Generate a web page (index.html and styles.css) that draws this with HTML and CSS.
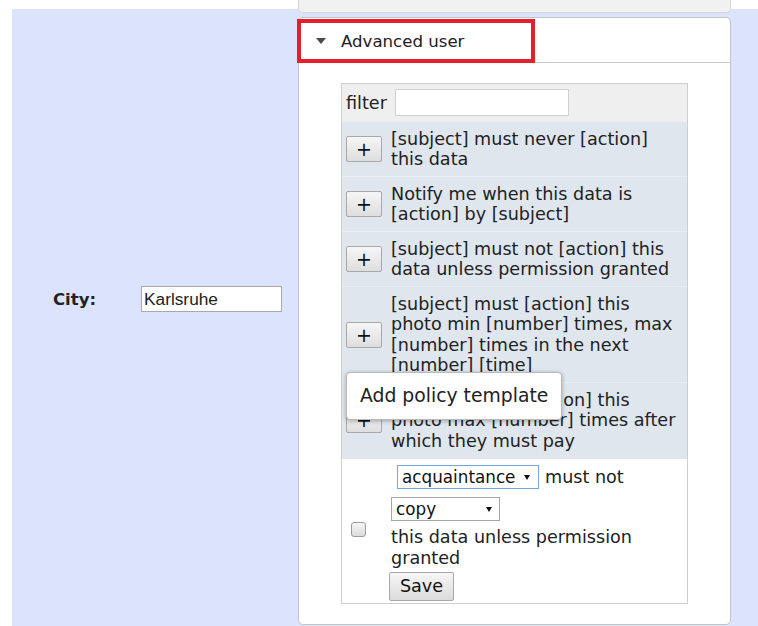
FILE: index.html
```html
<!DOCTYPE html>
<html lang="en">
<head>
<meta charset="utf-8">
<title>Profile privacy settings</title>
<link rel="stylesheet" href="styles.css">
</head>
<body>
<div class="page">
  <div class="fields">
    <label class="field-label" for="city">City:</label>
    <input class="text-input" id="city" type="text" value="Karlsruhe">
  </div>

  <div class="side">
    <div class="stub"></div>
    <section class="panel">
      <header class="panel-head">
        <span class="caret"></span>
        <span class="panel-title">Advanced user</span>
        <span class="highlight"></span>
      </header>

      <div class="panel-body">
        <div class="templates">
          <div class="filter-row">
            <span>filter</span>
            <input class="filter-input" type="text">
          </div>

          <div class="tpl-row">
            <button class="add-btn" type="button">+</button>
            <div class="tpl-text">[subject] must never [action] this data</div>
          </div>
          <div class="tpl-row">
            <button class="add-btn" type="button">+</button>
            <div class="tpl-text">Notify me when this data is [action] by [subject]</div>
          </div>
          <div class="tpl-row">
            <button class="add-btn" type="button">+</button>
            <div class="tpl-text">[subject] must not [action] this data unless permission granted</div>
          </div>
          <div class="tpl-row">
            <button class="add-btn" type="button">+</button>
            <div class="tpl-text">[subject] must [action] this photo min [number] times, max [number] times in the next [number] [time]</div>
          </div>
          <div class="tpl-row">
            <button class="add-btn" type="button">+</button>
            <div class="tpl-text">[subject] must [action] this photo max [number] times after which they must pay</div>
            <div class="tooltip">Add policy template</div>
          </div>

          <div class="rule-row">
            <input class="check" type="checkbox">
            <div class="rule-body">
              <div class="rule-line first">
                <span class="select-wrap wide focus">
                  <select class="select"><option>acquaintance</option></select>
                </span>
                <span>must not</span>
              </div>
              <div class="rule-line">
                <span class="select-wrap narrow">
                  <select class="select"><option>copy</option></select>
                </span>
              </div>
              <div class="rule-text">this data unless permission granted</div>
              <button class="save-btn" type="button">Save</button>
            </div>
          </div>
        </div>
      </div>
    </section>
  </div>
</div>
</body>
</html>
```

FILE: styles.css
```css
html, body {
  margin: 0;
  padding: 0;
  background: #ffffff;
  overflow: hidden;
}

body {
  font-family: "DejaVu Sans", Verdana, sans-serif;
  font-size: 17.6px;
  color: #222222;
}

.page {
  margin: 9px 0 0 12px;
  min-height: 617px;
  background: #dbe4fc;
  display: flex;
  align-items: flex-start;
}

/* left column with the profile field */
.fields {
  width: 286px;
  box-sizing: border-box;
  padding: 0 0 37px 41px;
  align-self: stretch;
  display: flex;
  align-items: center;
}

.field-label {
  width: 88px;
  font-weight: bold;
  font-size: 16.5px;
}

.text-input {
  width: 141px;
  height: 26px;
  box-sizing: border-box;
  border: 1px solid #a9a9a9;
  padding: 0 2px;
  font-family: "Liberation Sans", Arial, sans-serif;
  font-size: 17.3px;
  color: #222;
  background: #fff;
}

/* right column: collapsed section stub + open section */
.side {
  width: 433px;
  display: flex;
  flex-direction: column;
}

.stub {
  margin-top: -9px;
  height: 13px;
  box-sizing: border-box;
  background: #f1f1f1;
  border: 1px solid #d6d6d6;
  border-top: none;
  border-radius: 0 0 5px 5px;
}

.panel {
  margin-top: 4px;
  background: #ffffff;
  border: 1px solid #c4c4c4;
  border-radius: 5px;
}

.panel-head {
  position: relative;
  height: 45px;
  box-sizing: border-box;
  padding: 2px 0 0 17px;
  border-bottom: 1px solid #cccccc;
  display: flex;
  align-items: center;
}

.caret {
  width: 0;
  height: 0;
  border-left: 5px solid transparent;
  border-right: 5px solid transparent;
  border-top: 6px solid #4a4a4a;
  margin-right: 15px;
}

.panel-title {
  font-size: 16.6px;
  color: #222;
}

.highlight {
  position: absolute;
  left: -2px;
  top: 1px;
  width: 238px;
  height: 44px;
  box-sizing: border-box;
  border: 4px solid #e3202b;
}

.panel-body {
  padding: 20px 42px;
}

.templates {
  border: 1px solid #cfcfcf;
}

.filter-row {
  height: 37px;
  background: #efefef;
  display: flex;
  align-items: center;
  gap: 8px;
  padding: 0 4px;
}

.filter-input {
  width: 174px;
  height: 27px;
  box-sizing: border-box;
  border: 1px solid #d2d2d2;
  background: #fff;
  margin: 0;
}

.tpl-row {
  position: relative;
  display: grid;
  grid-template-columns: 36px 1fr;
  column-gap: 9px;
  align-items: center;
  padding: 6.5px 4px;
  background: #dfe6ee;
  border-top: 1px solid #e9eef3;
  line-height: 20.5px;
}

.add-btn {
  width: 36px;
  height: 26px;
  margin: 0;
  padding: 0;
  border: 1px solid #a8a8a8;
  border-radius: 2px;
  background: linear-gradient(#f6f6f6, #dedede);
  font-family: "DejaVu Sans", sans-serif;
  font-size: 19px;
  line-height: 22px;
  color: #111;
}

.tooltip {
  position: absolute;
  left: 4px;
  top: -11px;
  width: 216px;
  height: 48px;
  box-sizing: border-box;
  padding-left: 13px;
  display: flex;
  align-items: center;
  background: #ffffff;
  border: 1px solid #b9b9b9;
  border-radius: 4px;
  box-shadow: 0 1px 4px rgba(0, 0, 0, 0.3);
  font-size: 18.8px;
  color: #222;
  z-index: 2;
}

.rule-row {
  display: grid;
  grid-template-columns: 36px 1fr;
  column-gap: 9px;
  padding: 2px 4px;
  border-top: 1px solid #e4e4e4;
  background: #fff;
}

.check {
  appearance: none;
  -webkit-appearance: none;
  align-self: center;
  margin: 0 0 3px 5px;
  width: 15px;
  height: 15px;
  border: 1px solid #9d9d9d;
  border-radius: 3px;
  background: linear-gradient(#f5f5f5, #dcdcdc);
}

.rule-line {
  height: 32px;
  display: flex;
  align-items: center;
  gap: 6px;
}

.rule-line.first {
  padding-left: 6px;
}

.select-wrap {
  position: relative;
  display: inline-block;
  height: 24px;
}

.select-wrap::after {
  content: "";
  position: absolute;
  top: 10px;
  width: 0;
  height: 0;
  border-left: 3px solid transparent;
  border-right: 3px solid transparent;
  border-top: 5px solid #111;
  pointer-events: none;
}

.select-wrap.wide { width: 142px; }
.select-wrap.wide::after { right: 9px; }
.select-wrap.narrow { width: 109px; }
.select-wrap.narrow::after { right: 8px; }

.select {
  appearance: none;
  -webkit-appearance: none;
  width: 100%;
  height: 24px;
  box-sizing: border-box;
  margin: 0;
  padding: 0 0 0 4px;
  border: 1px solid #a6a6a6;
  border-radius: 0;
  background: #fff;
  font-family: "DejaVu Sans", sans-serif;
  font-size: 16.8px;
  color: #111;
}

.select-wrap.focus .select {
  border-color: #7aa3df;
}

.rule-text {
  margin-top: 2px;
  line-height: 21px;
}

.save-btn {
  display: block;
  margin: 3px 0 0 -2px;
  width: 65px;
  height: 29px;
  padding: 0;
  border: 1px solid #a8a8a8;
  border-radius: 2px;
  background: linear-gradient(#f6f6f6, #dcdcdc);
  font-family: "DejaVu Sans", sans-serif;
  font-size: 17.6px;
  color: #111;
}
```
